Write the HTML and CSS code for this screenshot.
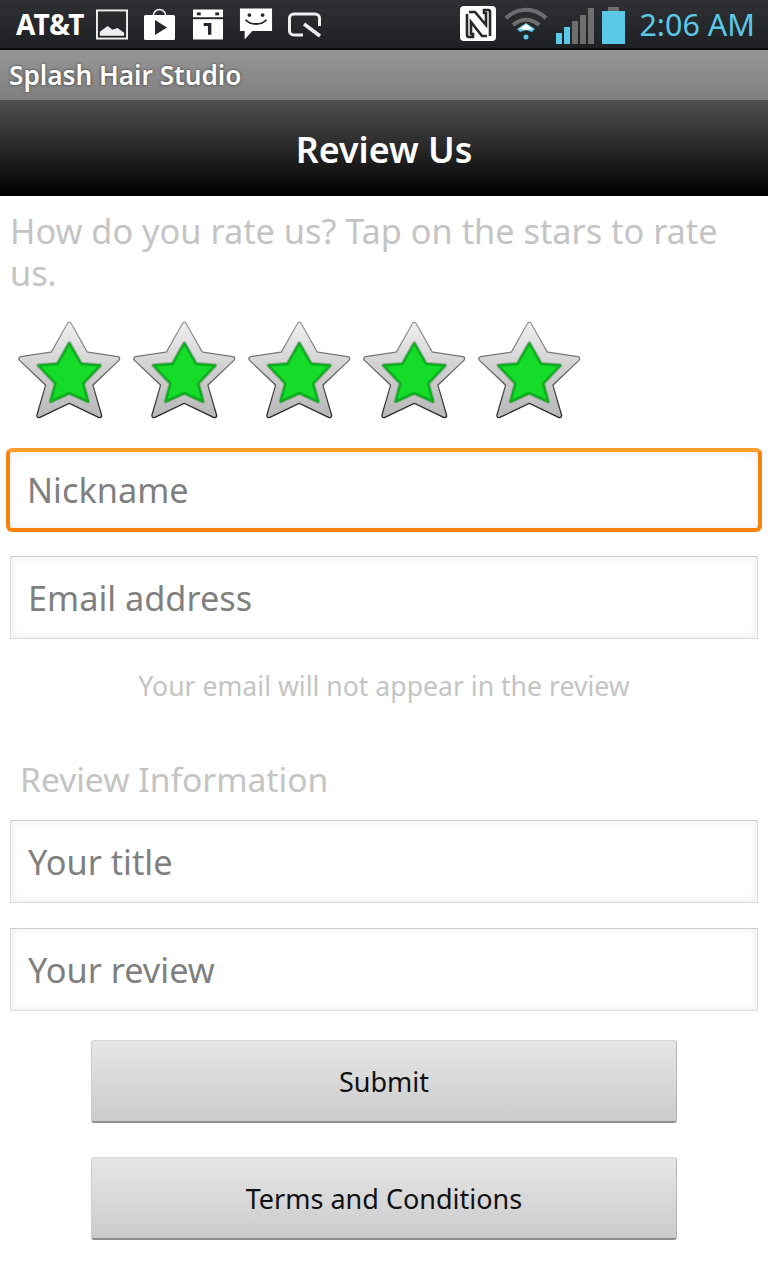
FILE: index.html
```html
<!DOCTYPE html>
<html lang="en">
<head>
    <meta charset="UTF-8">
    <meta name="viewport" content="width=device-width, initial-scale=1.0">
    <title>Splash Hair Studio</title>
    <link rel="stylesheet" href="styles.css">
</head>
<body>
    <svg class="defs" width="0" height="0">
        <defs>
            <linearGradient id="starFace" gradientUnits="userSpaceOnUse" x1="0" y1="322" x2="0" y2="418">
                <stop offset="0" stop-color="#f0f0f0"/>
                <stop offset="0.45" stop-color="#d2d2d2"/>
                <stop offset="1" stop-color="#b8b8b8"/>
            </linearGradient>
            <linearGradient id="starEdge" gradientUnits="userSpaceOnUse" x1="0" y1="322" x2="0" y2="418">
                <stop offset="0" stop-color="#9a9a9a"/>
                <stop offset="0.5" stop-color="#666"/>
                <stop offset="1" stop-color="#222"/>
            </linearGradient>
            <symbol id="star" viewBox="16 320 106 102">
                <path class="star-edge" d="M68.300 324.500L85 354l31.500 4.800-27 25.700 9 31-30.200-14.500-30.300 14.500 9-31-27-25.700 31.700-4.800z"/>
                <path class="star-face" d="M68.300 324.500L85 354l31.500 4.800-27 25.700 9 31-30.200-14.500-30.300 14.500 9-31-27-25.700 31.700-4.800z"/>
                <path class="star-groove" d="M68.300 343.500L80 364l19 1.500-17 18 5 18-18.700-8.500-18.700 8.500 5-18-17-18 19-1.500z"/>
                <path class="star-fill" d="M68.300 343.500L80 364l19 1.500-17 18 5 18-18.700-8.500-18.700 8.500 5-18-17-18 19-1.500z"/>
            </symbol>
        </defs>
    </svg>

    <div class="status-bar">
        <span class="carrier">AT&amp;T</span>
        <div class="status-icons">
            <svg width="32" height="31" viewBox="0 0 33 31"><rect x="1" y="1" width="31" height="29" fill="none" stroke="#eee" stroke-width="2"/><path d="M4 27v-4l8-6 5 4 5-2 7 5v3z" fill="#eee"/></svg>
            <svg width="33" height="32" viewBox="0 0 33 32"><path d="M9 9c0-10 13-10 13 0" fill="none" stroke="#eee" stroke-width="1.500"/><rect y="7" width="31" height="25" rx="1.500" fill="#fff"/><path d="M11 12l12 7.500L11 27z" fill="#25272b"/></svg>
            <svg width="30" height="31" viewBox="0 0 31 31"><rect width="31" height="31" fill="#fff"/><rect x="0" y="8" width="31" height="2" fill="#25272b"/><rect x="4" y="3" width="4" height="3" fill="#25272b"/><rect x="23" y="3" width="4" height="3" fill="#25272b"/><path d="M11 14h8v12h-3.500v-9H11z" fill="#25272b"/></svg>
            <svg width="34" height="32" viewBox="0 0 36 33"><path d="M1 0h34v24H14l-8 9v-9H1z" fill="#fff"/><circle cx="11" cy="7" r="2" fill="#25272b"/><circle cx="25" cy="7" r="2" fill="#25272b"/><path d="M7 12c5 6 17 6 22 0" fill="none" stroke="#25272b" stroke-width="2"/></svg>
            <svg class="search-icon" width="34" height="26" viewBox="0 0 34 26"><path d="M15 23H6c-3 0-4.500-2-4.500-4V6c0-2 1.500-4 4.500-4h21c3 0 4.500 2 4.500 4v8" fill="none" stroke="#eee" stroke-width="3"/><path d="M16 12l16 12" stroke="#eee" stroke-width="3.500"/></svg>
        </div>
        <div class="status-right">
            <svg width="36" height="36" viewBox="0 0 36 36"><rect width="36" height="35" rx="4" fill="#fff"/><path d="M9 6h6l11 13V7h-2V4h4c1.500 0 2 1 2 2v24M27 30h-5L11 16v12h2v3H9c-1.500 0-2-1-2-2V8" fill="none" stroke="#25272b" stroke-width="2.600"/></svg>
            <svg width="44" height="34" viewBox="0 0 44 34"><path d="M2 11c12-11 28-11 40 0" fill="none" stroke="#6e6e6e" stroke-width="4"/><path d="M9 18c8-7 18-7 26 0" fill="none" stroke="#6e6e6e" stroke-width="4"/><path d="M13 22l9-6 9 6-3 3-6-2-6 2z" fill="#5bc8e8"/><path d="M15 22l7-5 7 5-7 1z" fill="#fff"/><circle cx="22" cy="30" r="2.500" fill="#5bc8e8"/></svg>
            <svg class="signal" width="38" height="36" viewBox="0 0 38 36"><rect y="25" width="6" height="11" fill="#5bc8e8"/><rect x="8" y="19" width="6" height="17" fill="#5bc8e8"/><rect x="16" y="13" width="6" height="23" fill="#6e6e6e"/><rect x="24" y="7" width="6" height="29" fill="#6e6e6e"/><rect x="32" y="0" width="6" height="36" fill="#6e6e6e"/></svg>
            <svg class="battery" width="23" height="37" viewBox="0 0 23 37"><rect x="6" width="11" height="5" fill="#6e6e6e"/><rect y="4" width="23" height="33" fill="#5bc8e8"/></svg>
            <span class="clock">2:06 AM</span>
        </div>
    </div>
    <div class="app-title">Splash Hair Studio</div>
    <div class="page-header">Review Us</div>

    <div class="content">
        <div class="prompt">How do you rate us? Tap on the stars to rate us.</div>
        <div class="stars">
            <svg class="star"><use href="#star"/></svg>
            <svg class="star"><use href="#star"/></svg>
            <svg class="star"><use href="#star"/></svg>
            <svg class="star"><use href="#star"/></svg>
            <svg class="star"><use href="#star"/></svg>
        </div>
        <div class="field focused">Nickname</div>
        <div class="field">Email address</div>
        <div class="hint">Your email will not appear in the review</div>
        <div class="section-label">Review Information</div>
        <div class="field">Your title</div>
        <div class="field">Your review</div>
        <div class="buttons">
            <button class="btn">Submit</button>
            <button class="btn">Terms and Conditions</button>
        </div>
    </div>
</body>
</html>
```

FILE: styles.css
```css
body {
    margin: 0;
    padding: 0;
    background: white;
    font-family: 'Noto Sans', 'Open Sans', sans-serif;
    height: 1280px;
    overflow: hidden;
}
.defs {
    position: absolute;
}
.status-bar {
    height: 48px;
    border-bottom: 2px solid #0c0c0c;
    background: linear-gradient(#2e3034, #1f2024);
    display: flex;
    align-items: center;
    justify-content: space-between;
    padding: 0 13px 0 16px;
    color: white;
}
.carrier {
    font-size: 28px;
    font-weight: 700;
    margin-right: 11px;
}
.status-icons {
    display: flex;
    align-items: center;
    gap: 16px;
    flex: 1;
}
.search-icon {
    margin-top: 2px;
    margin-left: -1px;
}
.status-right {
    display: flex;
    align-items: center;
    gap: 8px;
}
.signal,
.battery {
    margin-top: 3px;
}
.clock {
    font-size: 30.500px;
    color: #5bc8e8;
    margin-left: 6px;
    white-space: nowrap;
}
.app-title {
    height: 50px;
    line-height: 50px;
    padding-left: 9px;
    background: linear-gradient(#969696, #7f7f7f);
    color: white;
    font-size: 26.200px;
    font-weight: 600;
    text-shadow: 0 0 3px #333;
}
.page-header {
    height: 96px;
    line-height: 98px;
    background: linear-gradient(#505050, #000);
    color: white;
    text-align: center;
    font-size: 35.800px;
    font-weight: 600;
}
.content {
    padding: 14px 10px 0;
}
.prompt {
    font-size: 34.300px;
    line-height: 42px;
    color: #c4c4c4;
}
.stars {
    display: flex;
    gap: 9px;
    margin: 26px 0 26px 7px;
}
.star {
    width: 106px;
    height: 102px;
}
.star-edge {
    fill: none;
    stroke: url(#starEdge);
    stroke-width: 5.500px;
    stroke-linejoin: round;
}
.star-face {
    fill: url(#starFace);
    stroke: url(#starFace);
    stroke-width: 3px;
    stroke-linejoin: round;
}
.star-groove {
    fill: none;
    stroke: #a8a8a8;
    stroke-width: 4.500px;
    stroke-linejoin: round;
}
.star-fill {
    fill: #14dc28;
    stroke: #0cb01f;
    stroke-width: 2.500px;
    stroke-linejoin: round;
}
.field {
    box-sizing: border-box;
    height: 83px;
    line-height: 82px;
    margin-bottom: 25px;
    padding-left: 17px;
    font-size: 34.300px;
    color: #7f7f7f;
    border: 1px solid #dcdcdc;
    border-top-color: #cfcfcf;
    box-shadow: inset 0 0 10px #ececec;
}
.field.focused {
    height: 84px;
    margin: 0 -4px 24px;
    padding-left: 17px;
    border: 4px solid #f7820c;
    border-top-color: #fd9f2d;
    border-radius: 6px;
    line-height: 76px;
}
.hint {
    margin-top: 29px;
    text-align: center;
    font-size: 26.600px;
    line-height: 36px;
    color: #c4c4c4;
}
.section-label {
    margin: 53px 0 19px 10px;
    font-size: 33.600px;
    line-height: 44px;
    color: #c4c4c4;
}
.buttons {
    display: flex;
    flex-direction: column;
    align-items: center;
    gap: 34px;
    margin-top: 29px;
}
.btn {
    width: 586px;
    height: 83px;
    padding: 0;
    border: 0;
    border-bottom: 2px solid #8f8f8f;
    border-right: 1px solid #b5b5b5;
    border-left: 1px solid #d0d0d0;
    border-top: 1px solid #d8d8d8;
    border-radius: 3px;
    background: linear-gradient(#e6e6e6, #cbcbcb);
    font-family: inherit;
    font-size: 27px;
    color: #111;
}
```
